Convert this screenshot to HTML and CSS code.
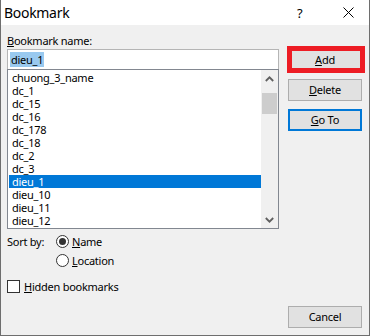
FILE: index.html
```html
<!DOCTYPE html>
<html>
<head>
<meta charset="utf-8">
<link rel="stylesheet" href="styles.css">
</head>
<body>
<div class="dialog">
  <div class="titlebar">
    <span class="title">Bookmark</span>
    <span class="help">?</span>
    <span class="close">
      <svg width="11" height="11" viewBox="0 0 11 11"><path d="M0.5 0.5 L10.5 10.5 M10.5 0.5 L0.5 10.5" stroke="#000" stroke-width="1" fill="none"/></svg>
    </span>
  </div>
  <div class="main">
    <div class="left">
      <div class="label"><u>B</u>ookmark name:</div>
      <div class="combo">
        <div class="edit"><span class="sel">dieu_1</span></div>
        <div class="list">
          <div class="items">
            <div class="item">chuong_3_name</div>
            <div class="item">dc_1</div>
            <div class="item">dc_15</div>
            <div class="item">dc_16</div>
            <div class="item">dc_178</div>
            <div class="item">dc_18</div>
            <div class="item">dc_2</div>
            <div class="item">dc_3</div>
            <div class="item selected">dieu_1</div>
            <div class="item">dieu_10</div>
            <div class="item">dieu_11</div>
            <div class="item">dieu_12</div>
          </div>
          <div class="scrollbar">
            <div class="arrow">
              <svg width="9" height="6" viewBox="0 0 9 6"><path d="M0.8 5 L4.5 1.3 L8.2 5" stroke="#606060" stroke-width="1.8" fill="none"/></svg>
            </div>
            <div class="track"><div class="thumb"></div></div>
            <div class="arrow">
              <svg width="9" height="6" viewBox="0 0 9 6"><path d="M0.8 1 L4.5 4.7 L8.2 1" stroke="#606060" stroke-width="1.8" fill="none"/></svg>
            </div>
          </div>
        </div>
      </div>
      <div class="sort">
        <div class="sortlabel">Sort by:</div>
        <div class="options">
          <div class="option"><span class="radio checked"></span><span><u>N</u>ame</span></div>
          <div class="option"><span class="radio"></span><span><u>L</u>ocation</span></div>
        </div>
      </div>
      <div class="check"><span class="box"></span><span><u>H</u>idden bookmarks</span></div>
    </div>
    <div class="right">
      <div class="btnwrap">
        <button class="btn"><u>A</u>dd</button>
        <div class="mark"></div>
      </div>
      <button class="btn"><u>D</u>elete</button>
      <button class="btn default"><u>G</u>o To</button>
      <button class="btn cancel">Cancel</button>
    </div>
  </div>
</div>
</body>
</html>
```
FILE: styles.css
```css
* { box-sizing: border-box; }
html, body { margin: 0; padding: 0; }
body {
  width: 370px;
  height: 336px;
  font-family: "Noto Sans", "Open Sans", sans-serif;
  font-size: 11px;
  letter-spacing: -0.25px;
  color: #000;
  background: #fff;
}
u { text-decoration: underline; text-underline-offset: 1px; }
.dialog {
  width: 370px;
  height: 336px;
  display: flex;
  flex-direction: column;
  background: #f0f0f0;
  border-left: 1px solid #6e6e6e;
  border-right: 1px solid #6e6e6e;
  border-bottom: 1px solid #6e6e6e;
}
.titlebar {
  height: 25px;
  background: #fff;
  display: flex;
  align-items: center;
  padding-left: 3px;
}
.title { font-size: 14px; letter-spacing: -0.3px; flex: 1; line-height: 20px; margin-top: 1px; }
.help { font-size: 13px; width: 14px; margin-right: 32px; line-height: 20px; margin-top: 1px; }
.close { width: 11px; height: 11px; margin-right: 15px; display: flex; }
.main {
  flex: 1;
  display: flex;
  padding: 0 7px 7px 6px;
}
.left { width: 272px; display: flex; flex-direction: column; }
.label { margin-top: 8px; line-height: 15px; height: 16px; }
.combo { display: flex; flex-direction: column; }
.edit {
  height: 20px;
  background: #fff;
  border: 1px solid #b5b5b5;
  border-bottom: none;
  padding: 2px 0 0 2px;
  line-height: 15px;
}
.sel { background: #99c9ef; padding: 0 1px; display: inline-block; height: 15px; }
.list {
  height: 160px;
  width: 272px;
  border: 1px solid #828790;
  background: #fff;
  display: flex;
}
.items { flex: 1; padding: 1px 0 0 1px; }
.item { height: 13px; line-height: 13px; padding-left: 3px; white-space: nowrap; }
.item.selected { background: #0078d7; color: #fff; }
.scrollbar {
  width: 17px;
  background: #f0f0f0;
  display: flex;
  flex-direction: column;
}
.arrow { height: 17px; display: flex; align-items: center; justify-content: center; }
.track { flex: 1; padding: 6px 1px 0 1px; }
.thumb { height: 21px; background: #cdcdcd; }
.sort { display: flex; margin-top: 5px; }
.sortlabel { width: 49px; line-height: 15px; }
.options { display: flex; flex-direction: column; gap: 4px; }
.option { display: flex; align-items: center; gap: 3px; line-height: 15px; }
.radio {
  width: 13px; height: 13px; border-radius: 50%;
  border: 1px solid #333; background: #fff;
  display: flex; align-items: center; justify-content: center;
}
.radio.checked::after {
  content: ""; width: 7px; height: 7px; border-radius: 50%; background: #333;
}
.check { display: flex; align-items: center; gap: 4px; margin-top: 11px; line-height: 15px; }
.box { width: 13px; height: 13px; border: 1px solid #333; background: #fff; }
.right {
  margin-left: 9px;
  width: 74px;
  display: flex;
  flex-direction: column;
  padding-top: 24px;
  gap: 8px;
}
.btnwrap { position: relative; }
.btn {
  width: 74px; height: 22px;
  background: #e1e1e1;
  border: 1px solid #adadad;
  font-family: inherit; font-size: 11px; letter-spacing: -0.25px; color: #000;
  padding: 0; line-height: 18px;
}
.btn.default { border: 2px solid #0078d7; }
.btn.cancel { margin-top: auto; }
.mark {
  position: absolute;
  left: -1px; top: -3px;
  width: 78px; height: 27px;
  border: 5px solid #ed1c24;
}
```
